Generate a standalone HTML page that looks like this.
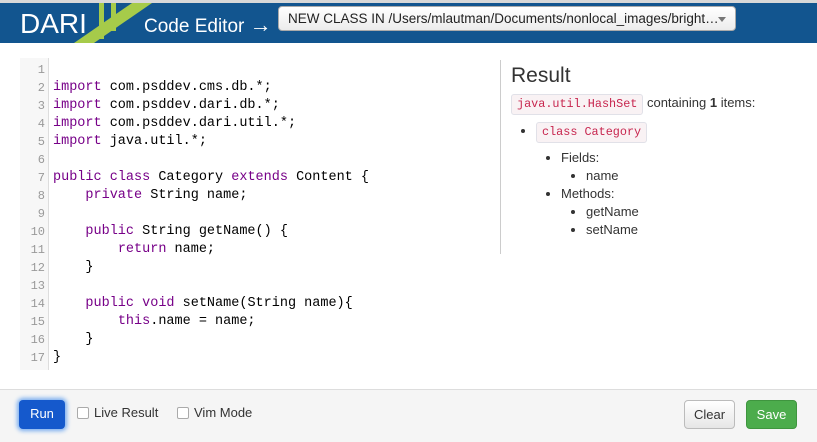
<!DOCTYPE html>
<html><head><meta charset="utf-8"><style>
*{box-sizing:border-box}
body{margin:0;width:817px;height:442px;overflow:hidden;background:#fff;font-family:"Liberation Sans",sans-serif;position:relative}
.top{position:absolute;left:0;top:0;width:817px;height:3px;background:#d8d8d8}
.hdr{position:absolute;left:0;top:3px;width:817px;height:40px;background:#12558f;overflow:hidden}
.logo{position:absolute;left:20px;top:5px;color:#fff;font-size:28px}
.ce{position:absolute;left:144px;top:9px;color:#fff;font-size:19px}
.ce span{font-size:22px}
.sel{position:absolute;left:278px;top:3px;width:458px;height:25px;background:linear-gradient(#fff,#ececec);border:1px solid #aaa;border-radius:4px;font-size:13.5px;color:#222;padding:4px 0 0 9px}
.sel:after{content:"";position:absolute;right:9px;top:10px;border:4px solid transparent;border-top:5px solid #777}
.gut{position:absolute;left:20px;top:58px;width:29px;height:312px;background:#f7f7f7;border-right:1px solid #ddd}
.code{position:absolute;left:20px;top:61px;font-family:"Liberation Mono",monospace;font-size:13.5px;line-height:18px;color:#000}
.ln{display:flex;height:18px}
.n{width:25px;text-align:right;color:#999;font-size:12px}
.t{margin-left:8px;white-space:pre}
.k{color:#770088}
.div{position:absolute;left:500px;top:60px;width:1px;height:194px;background:#ccc}
.res{position:absolute;left:511px;top:63px;font-size:13px;color:#333}
.res h1{font-size:21px;font-weight:normal;margin:0 0 5px 0;line-height:26px}
code{font-family:"Liberation Mono",monospace;color:#c7254e;background:#f9f2f4;border:1px solid #e1e1e8;border-radius:3px;padding:3px 5px;font-size:11.8px;display:inline-block;line-height:13px}
ul{margin:0;padding-left:25px;list-style:disc}
li{line-height:18px}
.foot{position:absolute;left:0;top:389px;width:817px;height:53px;background:#f5f5f5;border-top:1px solid #ddd}
.btn{position:absolute;top:10px;height:29px;border-radius:4px;font-size:13px;text-align:center;line-height:28px}
.run{left:19px;width:46px;background:#1559cc;color:#fff;box-shadow:0 0 4px 2px #7aaef0}
.clear{left:684px;width:51px;background:linear-gradient(#fff,#e6e6e6);border:1px solid #bbb;color:#333}
.save{left:746px;width:51px;background:#4cac4c;border:1px solid #3f953f;color:#fff}
.cb{position:absolute;top:17px;width:12px;height:12px;border:1px solid #aaa;border-radius:2px;background:#fff}
.lbl{position:absolute;top:15px;font-size:13px;color:#333}
</style></head><body>
<div class="top"></div>
<div class="hdr">
<svg width="160" height="40" style="position:absolute;left:0;top:0">
<polygon points="74,40 94,40 152,0 132,0" fill="#a6cb4a"/>
<rect x="99" y="0" width="5" height="36" fill="#a6cb4a"/>
<rect x="111" y="0" width="5" height="28" fill="#a6cb4a"/>
</svg>
<div class="logo">DARI</div>
<div class="ce">Code Editor <span>→</span></div>
<div class="sel">NEW CLASS IN /Users/mlautman/Documents/nonlocal_images/bright…</div>
</div>
<div class="gut"></div>
<div class="code">
<div class="ln"><span class="n">1</span><span class="t"></span></div>
<div class="ln"><span class="n">2</span><span class="t"><span class="k">import</span> com.psddev.cms.db.*;</span></div>
<div class="ln"><span class="n">3</span><span class="t"><span class="k">import</span> com.psddev.dari.db.*;</span></div>
<div class="ln"><span class="n">4</span><span class="t"><span class="k">import</span> com.psddev.dari.util.*;</span></div>
<div class="ln"><span class="n">5</span><span class="t"><span class="k">import</span> java.util.*;</span></div>
<div class="ln"><span class="n">6</span><span class="t"></span></div>
<div class="ln"><span class="n">7</span><span class="t"><span class="k">public</span> <span class="k">class</span> Category <span class="k">extends</span> Content {</span></div>
<div class="ln"><span class="n">8</span><span class="t">    <span class="k">private</span> String name;</span></div>
<div class="ln"><span class="n">9</span><span class="t"></span></div>
<div class="ln"><span class="n">10</span><span class="t">    <span class="k">public</span> String getName() {</span></div>
<div class="ln"><span class="n">11</span><span class="t">        <span class="k">return</span> name;</span></div>
<div class="ln"><span class="n">12</span><span class="t">    }</span></div>
<div class="ln"><span class="n">13</span><span class="t"></span></div>
<div class="ln"><span class="n">14</span><span class="t">    <span class="k">public</span> <span class="k">void</span> setName(String name){</span></div>
<div class="ln"><span class="n">15</span><span class="t">        <span class="k">this</span>.name = name;</span></div>
<div class="ln"><span class="n">16</span><span class="t">    }</span></div>
<div class="ln"><span class="n">17</span><span class="t">}</span></div>
</div>
<div class="div"></div>
<div class="res">
<h1>Result</h1>
<div style="margin-bottom:7px"><code>java.util.HashSet</code> containing <b>1</b> items:</div>
<ul><li><code>class Category</code>
<ul style="margin-top:6px"><li>Fields:<ul><li>name</li></ul></li><li>Methods:<ul><li>getName</li><li>setName</li></ul></li></ul>
</li></ul>
</div>
<div class="foot">
<div class="btn run">Run</div>
<div class="cb" style="left:77px"></div><div class="lbl" style="left:94px">Live Result</div>
<div class="cb" style="left:177px"></div><div class="lbl" style="left:194px">Vim Mode</div>
<div class="btn clear">Clear</div>
<div class="btn save">Save</div>
</div>
</body></html>
